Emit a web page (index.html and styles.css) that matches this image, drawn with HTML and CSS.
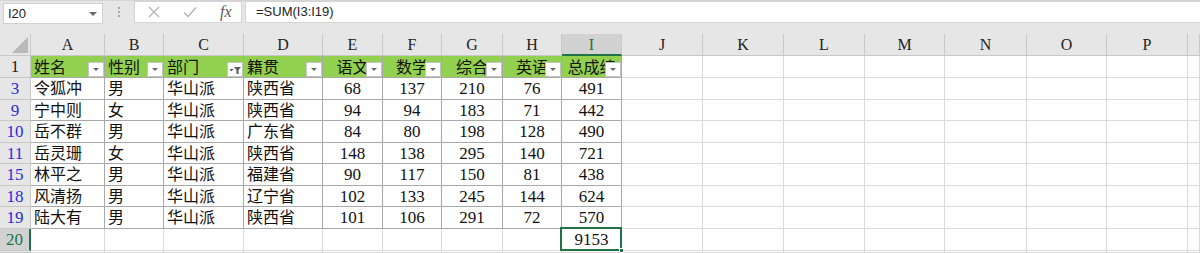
FILE: index.html
```html
<!DOCTYPE html>
<html lang="zh">
<head>
<meta charset="utf-8">
<link rel="stylesheet" href="styles.css">
</head>
<body>
<div class="topbar">
  <div class="namebox"><span class="nb-text">I20</span><span class="nb-arrow"></span></div>
  <div class="sep"><span></span><span></span><span></span></div>
  <div class="fxbox">
    <svg class="ico-x" width="14" height="14" viewBox="0 0 14 14"><path d="M2 2L12 12M12 2L2 12" stroke="#b3b3b3" stroke-width="1.3" fill="none"/></svg>
    <svg class="ico-ok" width="16" height="14" viewBox="0 0 16 14"><path d="M2 7.5L6 11.5L14 2.5" stroke="#b3b3b3" stroke-width="1.4" fill="none"/></svg>
    <span class="fx">fx</span>
  </div>
  <div class="formula">=SUM(I3:I19)</div>
</div>
<div class="sheet">
  <div class="corner"><svg width="31" height="22" viewBox="0 0 31 22"><polygon points="28,3 28,19 12,19" fill="#b9b9b9"/></svg></div>
  <div class="ch">A</div><div class="ch">B</div><div class="ch">C</div><div class="ch">D</div><div class="ch">E</div><div class="ch">F</div><div class="ch">G</div><div class="ch">H</div><div class="ch ch-sel">I</div><div class="ch">J</div><div class="ch">K</div><div class="ch">L</div><div class="ch">M</div><div class="ch">N</div><div class="ch">O</div><div class="ch">P</div><div class="ch"></div>

  <div class="rh rh-top">1</div>
  <div class="c t hd">姓名<span class="fb"><i class="tri"></i></span></div>
  <div class="c t hd">性别<span class="fb"><i class="tri"></i></span></div>
  <div class="c t hd">部门<span class="fb fb-f"><svg width="14" height="12" viewBox="0 0 14 12"><polygon points="6,3 13,3 10.5,6 10.5,10 8.5,10 8.5,6" fill="#595959"/><polygon points="1.5,5 5.5,5 3.5,7.5" fill="#595959"/></svg></span></div>
  <div class="c t hd">籍贯<span class="fb"><i class="tri"></i></span></div>
  <div class="c t hd ctr">语文<span class="fb"><i class="tri"></i></span></div>
  <div class="c t hd ctr">数学<span class="fb"><i class="tri"></i></span></div>
  <div class="c t hd ctr">综合<span class="fb"><i class="tri"></i></span></div>
  <div class="c t hd ctr">英语<span class="fb"><i class="tri"></i></span></div>
  <div class="c t hd ctr">总成绩<span class="fb"><i class="tri"></i></span></div>
  <div class="c"></div><div class="c"></div><div class="c"></div><div class="c"></div><div class="c"></div><div class="c"></div><div class="c"></div><div class="c"></div>

  <div class="rh rh-f">3</div>
  <div class="c t">令狐冲</div><div class="c t">男</div><div class="c t">华山派</div><div class="c t">陕西省</div>
  <div class="c t n">68</div><div class="c t n">137</div><div class="c t n">210</div><div class="c t n">76</div><div class="c t n">491</div>
  <div class="c"></div><div class="c"></div><div class="c"></div><div class="c"></div><div class="c"></div><div class="c"></div><div class="c"></div><div class="c"></div>

  <div class="rh rh-f">9</div>
  <div class="c t">宁中则</div><div class="c t">女</div><div class="c t">华山派</div><div class="c t">陕西省</div>
  <div class="c t n">94</div><div class="c t n">94</div><div class="c t n">183</div><div class="c t n">71</div><div class="c t n">442</div>
  <div class="c"></div><div class="c"></div><div class="c"></div><div class="c"></div><div class="c"></div><div class="c"></div><div class="c"></div><div class="c"></div>

  <div class="rh rh-f">10</div>
  <div class="c t">岳不群</div><div class="c t">男</div><div class="c t">华山派</div><div class="c t">广东省</div>
  <div class="c t n">84</div><div class="c t n">80</div><div class="c t n">198</div><div class="c t n">128</div><div class="c t n">490</div>
  <div class="c"></div><div class="c"></div><div class="c"></div><div class="c"></div><div class="c"></div><div class="c"></div><div class="c"></div><div class="c"></div>

  <div class="rh rh-f">11</div>
  <div class="c t">岳灵珊</div><div class="c t">女</div><div class="c t">华山派</div><div class="c t">陕西省</div>
  <div class="c t n">148</div><div class="c t n">138</div><div class="c t n">295</div><div class="c t n">140</div><div class="c t n">721</div>
  <div class="c"></div><div class="c"></div><div class="c"></div><div class="c"></div><div class="c"></div><div class="c"></div><div class="c"></div><div class="c"></div>

  <div class="rh rh-f">15</div>
  <div class="c t">林平之</div><div class="c t">男</div><div class="c t">华山派</div><div class="c t">福建省</div>
  <div class="c t n">90</div><div class="c t n">117</div><div class="c t n">150</div><div class="c t n">81</div><div class="c t n">438</div>
  <div class="c"></div><div class="c"></div><div class="c"></div><div class="c"></div><div class="c"></div><div class="c"></div><div class="c"></div><div class="c"></div>

  <div class="rh rh-f">18</div>
  <div class="c t">风清扬</div><div class="c t">男</div><div class="c t">华山派</div><div class="c t">辽宁省</div>
  <div class="c t n">102</div><div class="c t n">133</div><div class="c t n">245</div><div class="c t n">144</div><div class="c t n">624</div>
  <div class="c"></div><div class="c"></div><div class="c"></div><div class="c"></div><div class="c"></div><div class="c"></div><div class="c"></div><div class="c"></div>

  <div class="rh rh-f">19</div>
  <div class="c t">陆大有</div><div class="c t">男</div><div class="c t">华山派</div><div class="c t">陕西省</div>
  <div class="c t n">101</div><div class="c t n">106</div><div class="c t n">291</div><div class="c t n">72</div><div class="c t n">570</div>
  <div class="c"></div><div class="c"></div><div class="c"></div><div class="c"></div><div class="c"></div><div class="c"></div><div class="c"></div><div class="c"></div>

  <div class="rh rh-sel">20</div>
  <div class="c"></div><div class="c"></div><div class="c"></div><div class="c"></div><div class="c"></div><div class="c"></div><div class="c"></div><div class="c"></div>
  <div class="c n sel">9153<span class="handle"></span></div>
  <div class="c"></div><div class="c"></div><div class="c"></div><div class="c"></div><div class="c"></div><div class="c"></div><div class="c"></div><div class="c"></div>

  <div class="rh"></div>
  <div class="c"></div><div class="c"></div><div class="c"></div><div class="c"></div><div class="c"></div><div class="c"></div><div class="c"></div><div class="c"></div><div class="c"></div>
  <div class="c"></div><div class="c"></div><div class="c"></div><div class="c"></div><div class="c"></div><div class="c"></div><div class="c"></div><div class="c"></div>
</div>
</body>
</html>
```

FILE: styles.css
```css
* { box-sizing: border-box; margin: 0; padding: 0; }
html, body { width: 1200px; height: 253px; overflow: hidden; background: #ffffff; }
body { font-family: "Liberation Serif", "Noto Sans CJK SC", serif; }

.topbar {
  display: flex;
  align-items: flex-start;
  height: 34px;
  background: #e6e6e6;
  border-top: 1px solid #d4d4d4;
}
.namebox {
  position: relative;
  width: 100px;
  height: 21px;
  margin: 2px 0 0 3px;
  background: #ffffff;
  border: 1px solid #d0d0d0;
  font: 13px/19px "Liberation Sans", sans-serif;
  color: #222;
  padding-left: 4px;
}
.nb-arrow {
  position: absolute;
  right: 5px;
  top: 8px;
  border-left: 4px solid transparent;
  border-right: 4px solid transparent;
  border-top: 4px solid #6b6b6b;
}
.sep {
  width: 31px;
  height: 22px;
  display: flex;
  flex-direction: column;
  align-items: center;
  justify-content: center;
  gap: 2px;
}
.sep span { width: 2px; height: 2px; background: #a8a8a8; }
.fxbox {
  width: 108px;
  height: 22px;
  background: #ffffff;
  border: 1px solid #d4d4d4;
  display: flex;
  align-items: center;
  padding-left: 12px;
}
.ico-x { margin-right: 21px; }
.ico-ok { margin-right: 22px; }
.fx {
  font: italic 16px "Liberation Serif", serif;
  color: #5a5a5a;
}
.formula {
  flex: 1;
  height: 22px;
  margin-left: 3px;
  background: #ffffff;
  border: 1px solid #d4d4d4;
  border-right: none;
  font: 13px/20px "Liberation Sans", sans-serif;
  color: #222;
  padding-left: 10px;
}

.sheet {
  display: grid;
  grid-template-columns: 31px 74px 59px 80px 79px 60px 59px 61px 59px 60px 81px 81px 81px 80px 82px 80px 81px 1fr;
  grid-template-rows: 22px 22px 22px 21px 22px 21px 22px 21px 22px 22px 1fr;
  height: 219px;
}
.corner {
  background: #e6e6e6;
  border-right: 1px solid #c8c8c8;
  border-bottom: 1px solid #c8c8c8;
}
.corner svg { display: block; }
.ch {
  background: #e6e6e6;
  border-right: 1px solid #c8c8c8;
  border-bottom: 1px solid #c8c8c8;
  text-align: center;
  font: 16px/21px "Liberation Serif", serif;
  color: #222;
}
.ch-sel {
  background: #d2d2d2;
  color: #217346;
  border-bottom: 2px solid #217346;
}
.rh {
  background: #e6e6e6;
  border-right: 1px solid #c8c8c8;
  border-bottom: 1px solid #c8c8c8;
  text-align: center;
  font: 17px/22px "Liberation Serif", serif;
  color: #222;
}
.rh-f { color: #2b2bdc; }
.rh-sel {
  background: #d2d2d2;
  color: #217346;
  border-right: 2px solid #217346;
}
.c {
  position: relative;
  border-right: 1px solid #dadada;
  border-bottom: 1px solid #dadada;
  font: 16px/21px "Liberation Serif", "Noto Sans CJK SC", serif;
  color: #111;
  padding-left: 3px;
  white-space: nowrap;
}
.c.t {
  border-right-color: #a9a9a9;
  border-bottom-color: #a9a9a9;
}
.c.n {
  text-align: center;
  padding-left: 0;
  font-size: 17px;
}
.hd {
  background: #92d050;
  font-family: "Noto Sans CJK SC", sans-serif;
  font-size: 16px;
  line-height: 21px;
  color: #111;
}
.hd.ctr { text-align: center; padding-left: 0; }
.fb {
  position: absolute;
  right: 0;
  bottom: 0;
  width: 16px;
  height: 15px;
  background: #ffffff;
  border: 1px solid #c4c4c4;
  display: flex;
  align-items: center;
  justify-content: center;
}
.tri {
  display: block;
  border-left: 3px solid transparent;
  border-right: 3px solid transparent;
  border-top: 3px solid #6a6a6a;
}
.fb-f svg { display: block; }
.sel::after {
  content: "";
  position: absolute;
  left: -2px;
  top: -2px;
  right: -1px;
  bottom: -1px;
  border: 2px solid #217346;
}
.handle {
  position: absolute;
  right: -3px;
  bottom: -3px;
  width: 5px;
  height: 5px;
  background: #217346;
  border: 1px solid #ffffff;
  z-index: 2;
}
```
